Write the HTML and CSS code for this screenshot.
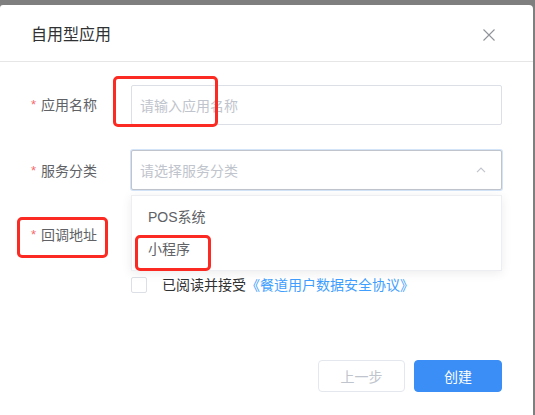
FILE: index.html
```html
<!DOCTYPE html>
<html lang="zh-CN">
<head>
<meta charset="utf-8">
<title>自用型应用</title>
<link rel="stylesheet" href="styles.css">
</head>
<body>
<div class="dialog">
  <div class="header">
    <span class="title">自用型应用</span>
    <svg class="close" width="12" height="12" viewBox="0 0 12 12"><path d="M0.5 0.5 L11.5 11.5 M11.5 0.5 L0.5 11.5" stroke="#909399" stroke-width="1.1" fill="none"/></svg>
  </div>
  <div class="form">
    <div class="row">
      <label class="label"><span class="req">*</span>应用名称</label>
      <div class="input"><span class="ph">请输入应用名称</span></div>
    </div>
    <div class="row">
      <label class="label"><span class="req">*</span>服务分类</label>
      <div class="select-wrap">
        <div class="input focus"><span class="ph">请选择服务分类</span>
          <svg class="arrow" width="10" height="6" viewBox="0 0 10 6"><path d="M1 5.2 L5 1.2 L9 5.2" stroke="#c0c4cc" stroke-width="1.2" fill="none"/></svg>
        </div>
        <div class="dropdown">
          <div class="item">POS系统</div>
          <div class="item">小程序</div>
        </div>
      </div>
    </div>
    <div class="row">
      <label class="label"><span class="req">*</span>回调地址</label>
      <div class="input"></div>
    </div>
    <div class="agree">
      <span class="checkbox"></span>
      <span class="agree-text">已阅读并接受<a class="link">《餐道用户数据安全协议》</a></span>
    </div>
  </div>
  <div class="footer">
    <button class="btn btn-prev">上一步</button>
    <button class="btn btn-primary">创建</button>
  </div>
  <div class="mark mark-1"></div>
  <div class="mark mark-2"></div>
  <div class="mark mark-3"></div>
</div>
</body>
</html>
```

FILE: styles.css
```css
* { box-sizing: border-box; }
html, body {
  margin: 0;
  padding: 0;
  height: 415px;
  overflow: hidden;
}
body {
  background: #7f7f7f;
  font-family: "Liberation Sans", "Noto Sans CJK SC", sans-serif;
  font-size: 14px;
  padding: 5px 2px 0 0;
}
.dialog {
  position: relative;
  background: #fff;
  height: 410px;
  border-radius: 3px 4px 0 0;
}
.header {
  height: 57px;
  padding: 4px 38px 0 31px;
  display: flex;
  align-items: center;
  justify-content: space-between;
  border-bottom: 1px solid #e6e6e6;
}
.title {
  font-size: 16px;
  color: #303133;
  line-height: 20px;
}
.close { display: block; }
.form {
  padding: 23px 31px 0 31px;
  display: flex;
  flex-direction: column;
  gap: 25px;
}
.row {
  display: flex;
  align-items: center;
  height: 40px;
}
.label {
  width: 100px;
  color: #606266;
  line-height: 20px;
  display: flex;
  align-items: center;
}
.req {
  color: #f56c6c;
  width: 10px;
  font-size: 13px;
}
.input {
  flex: 1;
  height: 40px;
  border: 1px solid #dcdfe6;
  border-radius: 2px;
  display: flex;
  align-items: center;
  padding: 0 14px 0 8px;
  background: #fff;
}
.ph { color: #c0c4cc; flex: 1; }
.input.focus {
  border-color: #c0c4cc;
  box-shadow: 0 0 0 1px #d3e4f8;
}
.row:nth-child(2) .label { position: relative; top: 1px; }
.select-wrap {
  flex: 1;
  position: relative;
  display: flex;
}
.arrow { display: block; margin-right: 1px; }
.dropdown {
  position: absolute;
  left: 0;
  right: 0;
  top: 45px;
  background: #fff;
  border: 1px solid #eceef2;
  box-shadow: 0 2px 10px rgba(0,0,0,0.08);
  padding: 5px 0;
  z-index: 2;
}
.item {
  height: 32px;
  line-height: 32px;
  padding-left: 16px;
  color: #606266;
}
.agree {
  margin-top: -3px;
  display: flex;
  align-items: center;
  padding-left: 100px;
  height: 16px;
}
.checkbox {
  width: 16px;
  height: 16px;
  border: 1px solid #dcdfe6;
  border-radius: 2px;
  margin-right: 15px;
}
.agree-text { color: #303133; line-height: 20px; }
.link { color: #409eff; }
.footer {
  margin-top: 67px;
  display: flex;
  justify-content: flex-end;
  gap: 9px;
  padding-right: 31px;
}
.btn {
  height: 32px;
  border-radius: 4px;
  font-family: inherit;
  font-size: 14px;
  padding: 0;
}
.btn-prev {
  width: 87px;
  background: #fff;
  border: 1px solid #e4e7ed;
  color: #c0c4cc;
}
.btn-primary {
  width: 88px;
  background: #3a8ef6;
  border: 1px solid #3a8ef6;
  color: #fff;
}
.mark {
  position: absolute;
  border: 3px solid #fb2a22;
  border-radius: 5px;
  z-index: 3;
}
.mark-1 { left: 113px; top: 71px; width: 105px; height: 51px; }
.mark-2 { left: 17px; top: 212px; width: 91px; height: 41px; }
.mark-3 { left: 135px; top: 230px; width: 76px; height: 36px; }
```
